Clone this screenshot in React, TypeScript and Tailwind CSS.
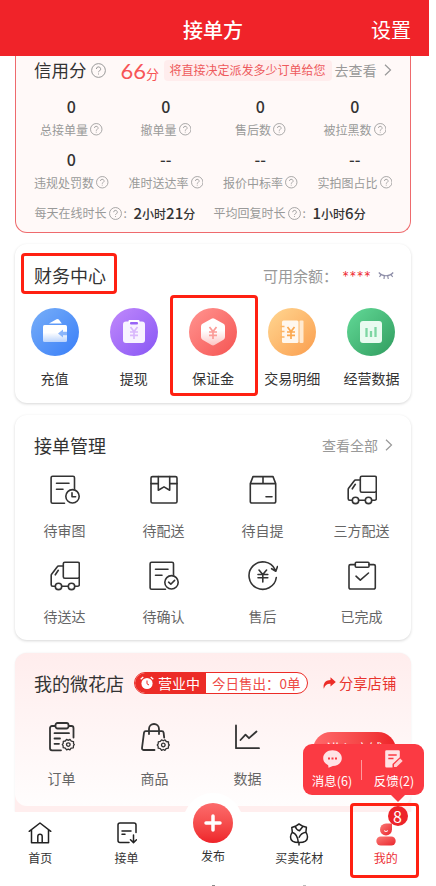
import type { ReactNode } from 'react';

const stats = [
  { label: '总接单量', value: '0' },
  { label: '撤单量', value: '0' },
  { label: '售后数', value: '0' },
  { label: '被拉黑数', value: '0' },
  { label: '违规处罚数', value: '0' },
  { label: '准时送达率', value: '--' },
  { label: '报价中标率', value: '--' },
  { label: '实拍图占比', value: '--' },
];

function Help({ className = 'size-[12.5px]' }: { className?: string }) {
  return (
    <svg viewBox="0 0 12 12" fill="none" stroke="currentColor" strokeWidth="0.8" className={`shrink-0 ${className}`}>
      <circle cx="6" cy="6" r="5.5" />
      <path d="M4.3 4.8a1.7 1.7 0 1 1 2.5 1.5c-.6.3-.8.6-.8 1.1M6 8.4v.8" />
    </svg>
  );
}

function Chevron({ className = '' }: { className?: string }) {
  return (
    <svg width="8" height="12" viewBox="0 0 8 12" fill="none" stroke="#999" strokeWidth="1.2" className={className}>
      <path d="m1 .8 5.500 5.200L1 11.200" />
    </svg>
  );
}

/* ---------- line icons ---------- */

function LineIcon({ children }: { children: ReactNode }) {
  return (
    <svg
      width="30"
      height="30"
      viewBox="0 0 30 30"
      fill="none"
      stroke="#333"
      strokeWidth="1.6"
      strokeLinecap="round"
      strokeLinejoin="round"
    >
      {children}
    </svg>
  );
}

const ReviewIcon = () => (
  <LineIcon>
    <path d="M14.5 28.3H2.6a1.5 1.5 0 0 1-1.500-1.500V2.800a1.500 1.500 0 0 1 1.500-1.500h20.400a1.500 1.500 0 0 1 1.500 1.500V14M6.500 8.300h12.500M6.500 14.200h6.500" />
    <circle cx="22.500" cy="21.300" r="6.700" />
    <path d="M22 17.800v4h3.600" />
  </LineIcon>
);

const ConfirmIcon = () => (
  <LineIcon>
    <path d="M16.500 28.300H2.600a1.500 1.500 0 0 1-1.500-1.500V2.800a1.500 1.500 0 0 1 1.500-1.500h20.400a1.500 1.500 0 0 1 1.500 1.500V14M6.500 8.300h12.500M6.500 14.200h6.500" />
    <circle cx="22.500" cy="21.300" r="6.700" />
    <path d="m19.600 21.200 2.200 2 3.800-3.800" />
  </LineIcon>
);

const ParcelIcon = () => (
  <LineIcon>
    <rect x="2" y="1.600" width="26" height="26.400" rx="1.500" />
    <path d="M2 8.600h7.300M20.700 8.600H28M9.300 1.600v13.600l5.700-3.300 5.700 3.300V1.600" />
  </LineIcon>
);

const BoxIcon = () => (
  <LineIcon>
    <path d="M2.300 8.600 5 1.600h20l2.700 7v17.900a1.500 1.500 0 0 1-1.500 1.500H3.800a1.500 1.500 0 0 1-1.500-1.500ZM2.300 8.600h25.400M15 1.600v7M18 21.800h6" />
  </LineIcon>
);

const TruckIcon = () => (
  <LineIcon>
    <rect x="13.300" y="1.200" width="16" height="16" rx="1.500" />
    <path d="M13.300 5H8.600a1.500 1.500 0 0 0-1.300.7L1.600 13.200a2 2 0 0 0-.4 1.200v9.300a1.500 1.500 0 0 0 1.500 1.500h2.500M11.900 25.200h6.300M24.900 25.200h2.900a1.500 1.500 0 0 0 1.500-1.500v-7M8.300 9.300l-3 4.500" />
    <circle cx="8.500" cy="25.400" r="3.200" />
    <circle cx="21.500" cy="25.400" r="3.200" />
  </LineIcon>
);

const RefundIcon = () => (
  <LineIcon>
    <path d="M28.300 16.500A13.700 13.700 0 1 1 27 8.500M29.500 5.500l-1.700 4.700-4.200-2.500" />
    <path d="m11 9 3.800 4.500L18.600 9M10 13.500h9.800M10 16.800h9.800M14.800 13.500V21" />
  </LineIcon>
);

const DoneIcon = () => (
  <LineIcon>
    <path d="M8.300 3.600H3.500A1.500 1.500 0 0 0 2 5.100v21.400A1.500 1.500 0 0 0 3.500 28h23.300a1.500 1.500 0 0 0 1.500-1.500V5.100a1.500 1.500 0 0 0-1.500-1.500H22" />
    <rect x="8.300" y="1.300" width="13.700" height="5" rx="1" />
    <path d="m9 15.200 4.300 4L21.500 12" />
  </LineIcon>
);

function Gear({ x, y }: { x: number; y: number }) {
  return (
    <g transform={`translate(${x} ${y})`} strokeWidth="1.3">
      <path d="m-1.700-5.200 1.700 1 1.700-1 1.300 1.700 2.200.5v2L6 0l-.8 1-.2 2.200-2.200.4-1.200 1.700L0 4.500l-1.700.8-1.300-1.700-2.100-.5-.1-2L-6 0l.9-1.200.1-2 2-.4Z" />
      <circle r="1.800" />
    </g>
  );
}

const ListIcon = () => (
  <LineIcon>
    <g strokeWidth="1.800">
      <path d="M8 4H5a2 2 0 0 0-2 2v20.300a2 2 0 0 0 2 2h9M22 4h2.500a2 2 0 0 1 2 2v9.500M7.500 11.200h14.500M7.500 16.500h5.500M7.500 21.800h4.500" />
      <rect x="8.500" y="1" width="13" height="5.500" rx="2" />
    </g>
    <Gear x={21.3} y={22.6} />
  </LineIcon>
);

const BagIcon = () => (
  <LineIcon>
    <path strokeWidth="1.800" d="M14.500 28H3.800a1.800 1.800 0 0 1-1.800-2L4 10.700A1.800 1.800 0 0 1 5.800 9.200h16a1.800 1.800 0 0 1 1.800 1.500l.6 5M9 12V7a5 5 0 0 1 10 0v5" />
    <Gear x={23.3} y={23} />
  </LineIcon>
);

const ChartIcon = () => (
  <LineIcon>
    <path strokeWidth="1.800" d="M3 3.500v22.700h23M7.500 18l5-5.300 3.500 3.500 7.500-6.700" />
  </LineIcon>
);

/* ---------- finance icons ---------- */

const Yen = ({ color }: { color: string }) => (
  <path d="m20.500 19 3.500 4.500 3.500-4.500M20 24h8M20 27.300h8M24 23.500V31" stroke={color} strokeWidth="1.700" fill="none" />
);

function Disc({ id, from, to, children }: { id: string; from: string; to: string; children: ReactNode }) {
  return (
    <svg width="48" height="48" viewBox="0 0 48 48">
      <defs>
        <linearGradient id={id} x1="0" y1="0" x2="1" y2="1">
          <stop offset="0.100" stopColor={from} />
          <stop offset="0.900" stopColor={to} />
        </linearGradient>
        <linearGradient id={`${id}-face`} x1="0" y1="0" x2="0" y2="1">
          <stop offset="0.450" stopColor="#fff" />
          <stop offset="1" stopColor="#fff" stopOpacity="0.600" />
        </linearGradient>
      </defs>
      <circle cx="24" cy="24" r="24" fill={`url(#${id})`} />
      {children}
    </svg>
  );
}

const finance = [
  {
    label: '充值',
    icon: (
      <Disc id="topup" from="#72aaf8" to="#3f83f8">
        <path d="m18 15.500 7.500-4.200a2 2 0 0 1 2.300.3l3 3.900Z" fill="#fff" />
        <rect x="12" y="17" width="24" height="17" rx="1.500" fill="url(#topup-face)" />
        <path d="M36 23.700h-4v-2.200L27 25.500l5 4v-2.200h4Z" fill="#8bb6fb" />
      </Disc>
    ),
  },
  {
    label: '提现',
    icon: (
      <Disc id="cash" from="#bb84fb" to="#8d5bf5">
        <rect x="13" y="13.500" width="22" height="21.500" rx="3" fill="#f8f3ff" />
        <rect x="18.500" y="12" width="11" height="3" rx="1" fill="#fff" />
        <rect x="20" y="14" width="8" height="2.500" rx="1" fill="#9864f6" />
        <Yen color="#d9b8fc" />
      </Disc>
    ),
  },
  {
    label: '保证金',
    icon: (
      <Disc id="deposit" from="#ff8e8a" to="#f65a58">
        <path d="M22.500 10.800a3 3 0 0 1 3 0l9 5a3 3 0 0 1 1.500 2.600v10.700a3 3 0 0 1-1.500 2.600l-9 5.300a3 3 0 0 1-3 0l-9-5.300a3 3 0 0 1-1.500-2.600V18.400a3 3 0 0 1 1.500-2.600Z" fill="url(#deposit-face)" />
        <Yen color="#fb9c98" />
      </Disc>
    ),
  },
  {
    label: '交易明细',
    icon: (
      <Disc id="detail" from="#ffd18b" to="#fba354">
        <rect x="14" y="12.500" width="16.500" height="22.500" rx="1.500" fill="#fff7ee" />
        <rect x="31.500" y="12.500" width="4" height="22.500" rx="1" fill="#ffe9d0" />
        <path d="M12.500 18.500h4M12.500 23.500h4M12.500 29h4" stroke="#fdb566" strokeWidth="1.500" />
        <g transform="translate(-1 0)">
          <Yen color="#fba850" />
        </g>
      </Disc>
    ),
  },
  {
    label: '经营数据',
    icon: (
      <Disc id="report" from="#5ed492" to="#35a264">
        <rect x="13" y="13" width="22" height="22" rx="3" fill="#e9fbf0" />
        <path d="M19.500 20v9M24 23v6M28.500 19v10" stroke="#7dd6a2" strokeWidth="2.300" />
      </Disc>
    ),
  },
];

const orders = [
  { label: '待审图', icon: <ReviewIcon /> },
  { label: '待配送', icon: <ParcelIcon /> },
  { label: '待自提', icon: <BoxIcon /> },
  { label: '三方配送', icon: <TruckIcon /> },
  { label: '待送达', icon: <TruckIcon /> },
  { label: '待确认', icon: <ConfirmIcon /> },
  { label: '售后', icon: <RefundIcon /> },
  { label: '已完成', icon: <DoneIcon /> },
];

const shop = [
  { label: '订单', icon: <ListIcon /> },
  { label: '商品', icon: <BagIcon /> },
  { label: '数据', icon: <ChartIcon /> },
];

function CreditCard() {
  return (
    <section className="h-[177px] rounded-b-xl border border-t-0 border-[#ee6a6d] bg-[#fff9f8] text-[#999]">
      <div className="flex h-7 items-center pl-[18px]">
        <h2 className="text-[17.5px] text-[#333]">信用分</h2>
        <Help className="ml-1 size-[15px]" />
        <span className="ml-[15px] w-[43px] whitespace-nowrap text-[#f75557]">
          <span className="font-[Lato] text-[22px]">66</span>
          <span className="text-[13px]">分</span>
        </span>
        <span className="flex h-[21px] w-[168px] items-center justify-center rounded-sm bg-[#ffeded] text-xs text-[#ee5a5c]">
          将直接决定派发多少订单给您
        </span>
        <span className="ml-[3px] text-sm">去查看</span>
        <Chevron className="ml-[7px]" />
      </div>

      <div className="mx-2 mt-[10px] grid grid-cols-4 gap-y-[6px]">
        {stats.map((s) => (
          <div key={s.label} className="flex flex-col items-center">
            <span className="h-6 text-base leading-6 font-medium text-[#333]">{s.value}</span>
            <span className="flex h-[23px] items-center gap-0.5 text-xs">
              {s.label}
              <Help />
            </span>
          </div>
        ))}
      </div>

      <div className="mt-[7px] flex h-6 items-center pl-[18.5px] text-xs whitespace-nowrap">
        每天在线时长
        <Help className="ml-0.5 size-[13px]" />
        <span className="w-3 pl-0.5">:</span>
        <span className="w-[80px] font-medium text-[#333]">
          <span className="text-[15px]">2</span>小时<span className="text-[15px]">21</span>分
        </span>
        平均回复时长
        <Help className="ml-0.5 size-[13px]" />
        <span className="w-3 pl-0.5">:</span>
        <span className="font-medium text-[#333]">
          <span className="text-[15px]">1</span>小时<span className="text-[15px]">6</span>分
        </span>
      </div>
    </section>
  );
}

function FinanceCard() {
  return (
    <section className="mt-[11px] h-[159px] rounded-xl bg-white shadow-[0_1px_3px_rgba(0,0,0,0.16)]">
      <div className="flex h-16 items-center justify-between pr-[17px] pl-[19px]">
        <div className="relative">
          <h2 className="-mt-0.5 text-lg text-[#333]">财务中心</h2>
          <div className="absolute -top-[10px] -left-[13px] h-[41px] w-24 rounded-sm border-3 border-[#ff2012]" />
        </div>
        <div className="flex items-center text-[15px] text-[#999]">
          可用余额：
          <span className="mt-1 ml-[4px] w-[32px] font-[Lato] text-[17px] leading-4 text-[#ee2a30]">****</span>
          <svg width="16" height="10" viewBox="0 0 16 10" fill="none" stroke="#8e8ea8" strokeWidth="1.2" className="ml-1">
            <path d="M.8 1.500c3.500 4.300 10.900 4.300 14.400 0M3 3.700 1.500 6M6.300 5 6 8M9.700 5l.6 3M13 3.700 14.700 6" />
          </svg>
        </div>
      </div>
      <div className="grid grid-cols-5">
        {finance.map((f) => (
          <div key={f.label} className="relative flex flex-col items-center">
            {f.icon}
            <span className="mt-3 text-sm leading-5 whitespace-nowrap text-[#333]">{f.label}</span>
            {f.label === '保证金' && (
              <div className="absolute -top-[13px] -left-[3px] h-[101px] w-[88px] rounded-sm border-3 border-[#ff2012]" />
            )}
          </div>
        ))}
      </div>
    </section>
  );
}

function OrderCard() {
  return (
    <section className="mt-3 h-[225px] rounded-xl bg-white shadow-[0_1px_3px_rgba(0,0,0,0.16)]">
      <div className="flex h-[60px] items-center justify-between pr-[18px] pl-[19px]">
        <h2 className="text-lg text-[#333]">接单管理</h2>
        <span className="flex items-center gap-[7px] text-sm text-[#999]">
          查看全部
          <Chevron />
        </span>
      </div>
      <div className="grid grid-cols-4 gap-y-5">
        {orders.map((o) => (
          <div key={o.label} className="flex h-[66px] flex-col items-center">
            {o.icon}
            <span className="mt-[15px] text-sm leading-5 text-[#666]">{o.label}</span>
          </div>
        ))}
      </div>
    </section>
  );
}

function ShopCard() {
  return (
    <section className="mt-[13px] h-[159px] rounded-t-xl bg-[#ffeeee] shadow-[0_0_2px_rgba(0,0,0,0.08)]">
      <div className="h-[153px] rounded-xl bg-linear-to-b from-[#ffeded] to-[#fffdfd]">
        <div className="flex h-[60px] items-center pl-[19px]">
          <h2 className="w-[100px] text-lg text-[#333]">我的微花店</h2>
          <div className="flex h-[22px] w-[174px] overflow-hidden rounded-full border border-[#ec2c27] bg-white">
            <span className="flex w-[71px] shrink-0 items-center gap-1 bg-[#ec2c27] pl-[5px] text-sm whitespace-nowrap text-white">
              <svg width="14" height="14" viewBox="0 0 14 14" fill="none" stroke="#fff" className="shrink-0">
                <circle cx="7" cy="7.5" r="5.6" fill="#fff" stroke="none" />
                <path d="M.7 3.300 3.300.9M13.300 3.300 10.700.9" strokeWidth="1.3" />
                <path d="M7 4.500v3.300l2 1.200" stroke="#ec2c27" />
              </svg>
              营业中
            </span>
            <span className="pl-1.5 text-[13.5px] leading-5 whitespace-nowrap text-[#ee4a46]">今日售出：0单</span>
          </div>
          <span className="ml-[15px] flex items-center gap-[3px] text-[14.3px] whitespace-nowrap text-[#e8332d]">
            <svg width="13" height="12" viewBox="0 0 13 12" fill="#ec2c27">
              <path d="M7.500.3 12.800 5 7.500 9.500V6.800C3.800 6.700 2 8.500.8 11.700-.3 6.500 2.500 3.200 7.500 3Z" />
            </svg>
            分享店铺
          </span>
        </div>
        <div className="flex">
          {shop.map((s) => (
            <div key={s.label} className="flex w-[93px] flex-col items-center pt-[9px]">
              {s.icon}
              <span className="mt-4 text-sm leading-5 text-[#666]">{s.label}</span>
            </div>
          ))}
          <div className="mt-[19px] ml-[19px] h-9 w-[83px] rounded-full bg-linear-to-r from-[#ff696b] to-[#ed2027] text-center text-sm leading-[32px] text-white">
            进入店铺
          </div>
        </div>
      </div>
    </section>
  );
}

function NoticeBubble() {
  return (
    <div className="absolute top-[744px] left-[303px] z-20 flex h-[51px] w-[121px] items-center rounded-[9px] bg-[#fb3a43] text-[12.5px] leading-4 text-white">
      <div className="flex w-[58px] flex-col items-center gap-[5px]">
        <svg width="19" height="18" viewBox="0 0 19 18">
          <path d="M9.500.3c5.200 0 9.300 3.500 9.300 7.900s-4.100 7.900-9 7.900L5.500 17.700l-.3-2.500C2.300 13.900.2 11.300.2 8.200.2 3.800 4.300.3 9.500.3Z" fill="#ffe3e5" />
          <path d="M5 7.500h2v2H5zM8.500 7.500h2v2h-2zM12 7.500h2v2h-2z" fill="#fb3a43" />
        </svg>
        消息(6)
      </div>
      <div className="h-5 w-px bg-[#fd9a9e]" />
      <div className="flex flex-1 flex-col items-center gap-[5px] pl-0.5">
        <svg width="18" height="18" viewBox="0 0 18 18">
          <path d="M1.500.3h12a1.300 1.300 0 0 1 1.300 1.300v5.600L7.500 14v3.500h-6a1.300 1.300 0 0 1-1.300-1.300V1.600A1.300 1.300 0 0 1 1.500.3Z" fill="#ffe3e5" />
          <path d="M3.300 5h8.400M3.300 8.500h5.200" stroke="#fb3a43" strokeWidth="1.3" />
          <path d="m9 14.500 6.200-6 2.500 2.500-6.200 6H9Z" fill="#ffd0d3" />
        </svg>
        反馈(2)
      </div>
      <div className="absolute top-[50px] left-[87px] border-x-8 border-t-8 border-x-transparent border-t-[#fb3a43]" />
    </div>
  );
}

const navStroke = {
  fill: 'none',
  stroke: '#222',
  strokeWidth: 1.5,
  strokeLinecap: 'round',
  strokeLinejoin: 'round',
} as const;

function TabBar() {
  return (
    <nav className="relative z-10 -ml-[3px] grid h-[74px] w-[439px] grid-cols-[repeat(5,86.4px)] bg-white text-center text-xs leading-4 text-[#333]">
      <div className="flex flex-col items-center pt-[10px]">
        <svg width="24" height="22" viewBox="0 0 24 22" {...navStroke}>
          <path d="M1.200 9.300 12 1l10.800 8.300M3.500 8v12.800h17V8M9.800 20.800v-6.300a2.200 2.200 0 0 1 4.400 0v6.300" />
        </svg>
        <span className="mt-[6px]">首页</span>
      </div>
      <div className="flex flex-col items-center pt-[10px]">
        <svg width="20" height="22" viewBox="0 0 20 22" {...navStroke}>
          <path d="M12 20.500H3a2 2 0 0 1-2-2V3a2 2 0 0 1 2-2h14a2 2 0 0 1 2 2v7.500M5 9h9M5 12.300h3M16.500 13v7.500M13.500 17.800l3 2.800 3-2.800" />
        </svg>
        <span className="mt-[6px]">接单</span>
      </div>
      <div className="relative">
        <div className="absolute -top-[19px] left-[13px] size-[60px] rounded-full bg-white" />
        <div className="absolute -top-[9px] left-[23px] flex size-10 items-center justify-center rounded-full bg-linear-to-b from-[#fc6b6c] to-[#ee2229]">
          <svg width="18" height="18" viewBox="0 0 18 18" stroke="#fff" strokeWidth="3.5" strokeLinecap="round">
            <path d="M9 2v14M2 9h14" />
          </svg>
        </div>
        <span className="relative block pt-[36px]">发布</span>
        <span className="absolute top-[73px] left-[42px] h-px w-[3px] bg-[#888]" />
      </div>
      <div className="relative flex flex-col items-center pt-[11px]">
        <svg width="20" height="23" viewBox="0 0 20 23" {...navStroke}>
          <path d="M3.300 9.200 2.800 4.500 6.300 3.300 10 1l4 2.300 3.400 1-.5 4.900c1 1.600 1.600 3 1.600 4.700 0 3.400-3 5.600-8.500 5.600s-8.500-2.200-8.500-5.600c0-1.700.8-3.200 1.800-4.700ZM6.300 3.300c.5 2.300 2 3.700 4.200 4.500L14 3.300M3.300 9.200c3.500 1.300 5.600 4.800 6 10.100M16.900 9.200c-3.400.6-5.500 2.200-6.700 5M10 19.500V22" />
        </svg>
        <span className="mt-1">买卖花材</span>
        <span className="absolute top-[73px] left-[47px] h-px w-[3px] bg-[#bbb]" />
      </div>
      <div className="relative flex flex-col items-center pt-[11px] text-[#ec2f35]">
        <svg width="20" height="23" viewBox="0 0 20 23">
          <defs>
            <linearGradient id="me" x1="0" y1="0" x2="1" y2="1">
              <stop stopColor="#fa7a76" />
              <stop offset="1" stopColor="#ea262d" />
            </linearGradient>
          </defs>
          <path d="M10 .5h6v6a6 6 0 1 1-6-6Z" fill="url(#me)" />
          <rect x=".3" y="13.5" width="19.4" height="9" rx="4.5" fill="url(#me)" />
          <path d="M8 7.500c1.200 1.300 2.800 1.300 4 0" stroke="#fff" fill="none" />
        </svg>
        <span className="mt-1">我的</span>
        <div className="absolute -top-[9px] left-[7px] h-[75px] w-[69px] rounded-sm border-3 border-[#ff2012]" />
        <span className="absolute -top-[6px] left-[45px] flex size-5 items-center justify-center rounded-full bg-[#ed2329] text-base text-white">
          8
        </span>
      </div>
    </nav>
  );
}

export default function App() {
  return (
    <div className="relative h-[886px] w-[436px] overflow-hidden bg-white font-['Noto_Sans_CJK_SC',sans-serif]">
      <header className="grid h-14 w-[429px] grid-cols-[1fr_auto_1fr] items-center bg-[#f02329] pt-[3px] pr-[18px] text-xl text-white">
        <h1 className="col-start-2 ml-[15px] font-medium">接单方</h1>
        <span className="justify-self-end">设置</span>
      </header>
      <main className="ml-[15px] w-[396px]">
        <CreditCard />
        <FinanceCard />
        <OrderCard />
        <ShopCard />
      </main>
      <TabBar />
      <NoticeBubble />
    </div>
  );
}
